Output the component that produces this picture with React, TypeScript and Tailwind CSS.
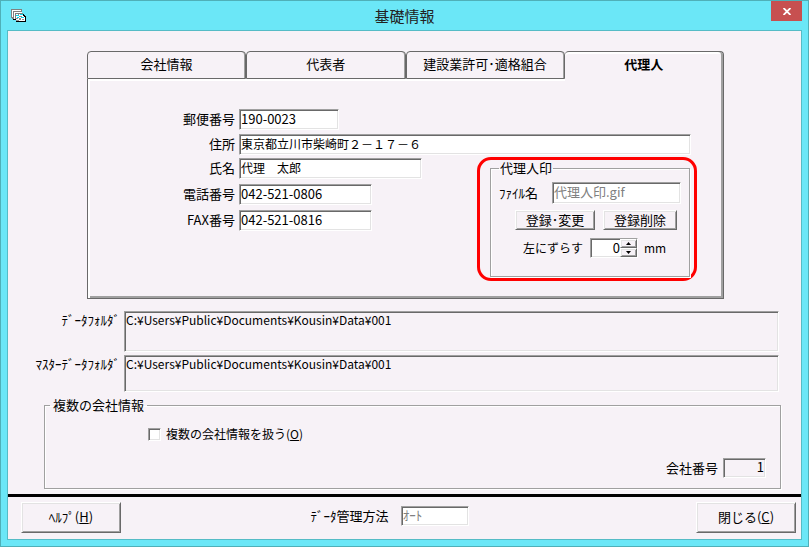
import { useState } from "react";

const tabs = ["会社情報", "代表者", "建設業許可･適格組合", "代理人"];

const sunken =
  "block border border-t-[#a0a0a0] border-l-[#a0a0a0] border-b-white border-r-white px-px leading-[16px] shadow-[inset_1px_1px_0_#696969,inset_-1px_-1px_0_#e3e3e3] outline-none";
const raised =
  "border border-t-white border-l-white border-b-[#696969] border-r-[#696969] bg-[#f7f2f7] shadow-[inset_1px_1px_0_#e3e3e3,inset_-1px_-1px_0_#a0a0a0] text-center";
const group = "border border-[#a0a0a0] shadow-[1px_1px_0_#fff,inset_1px_1px_0_#fff]";

function AppIcon() {
  return (
    <svg width="15" height="13" viewBox="0 0 15 13" shapeRendering="crispEdges">
      <path d="M0 0h11v9H0z" fill="#808080" />
      <path d="M1 1h9v7H1z" fill="#fff" />
      <path d="M1 9h1v1H1zM2 2h9v8H2z" fill="#808080" />
      <path d="M3 3h8v7H3z" fill="#fff" />
      <path d="M4 4h8v7H4z" fill="#808080" />
      <path d="M12 5h1v1h1v1h1v6H5v-1h9V8h-1V7h-1zM2 10h3v1H2z" fill="#000" />
      <path d="M5 5h7v2h1v1h1v4H5z" fill="#fff" />
      <path d="M5 6h3v1H5zM9 5h3v1H9zM6 8h2v1H6zM10 8h3v1h-3z" fill="#00d8f0" />
      <path d="M7 5h1v1H7zM8 7h3v1H8zM5 9h2v1H5zM8 9h2v2H8zM11 10h2v1h-2zM5 11h3v1H5z" fill="#909090" />
    </svg>
  );
}

type FieldProps = { id: string; label: string; value: string; width: string; focused?: boolean };

function Field({ id, label, value, width, focused }: FieldProps) {
  return (
    <div className="flex h-[21px] items-center gap-1">
      <label htmlFor={id} className="w-[147px] shrink-0 pb-[2px] text-right">
        {label}
      </label>
      <input
        id={id}
        defaultValue={value}
        autoFocus={focused}
        onFocus={(e) => e.target.setSelectionRange(value.length, value.length)}
        className={`${sunken} h-[21px] bg-white pb-[3px] ${width}`}
      />
    </div>
  );
}

export default function App() {
  const [active, setActive] = useState(3);
  const [shift, setShift] = useState(0);
  const [multi, setMulti] = useState(false);

  return (
    <div className="flex min-h-screen flex-col border border-[#4fb0b8] bg-[#6be7f7] px-[6px] pb-[6px] font-['Noto_Sans_CJK_JP',sans-serif] text-[13px] leading-[18px] text-black">
      <header className="grid h-[29px] grid-cols-[1fr_auto_1fr] items-center">
        <div className="pl-1">
          <AppIcon />
        </div>
        <h1 className="text-[15px] text-[#222]">基礎情報</h1>
        <button aria-label="閉じる" className="flex h-[20px] w-[31px] items-center justify-center self-start justify-self-end bg-[#c75050]">
          <svg width="8" height="7" viewBox="0 0 8 7">
            <path d="M0.5 0l7 7M7.5 0l-7 7" stroke="#fff" strokeWidth="1.8" />
          </svg>
        </button>
      </header>

      <main className="flex flex-1 flex-col border border-[#55bcc6] bg-[#f7f2f7]">
        <div className="flex-1 pb-1">
          <section className="mt-5 mr-[77px] ml-[79px]">
            <div role="tablist" className="grid grid-cols-4">
              {tabs.map((name, i) => (
                <button
                  key={name}
                  role="tab"
                  aria-selected={active === i}
                  onClick={() => setActive(i)}
                  className={
                    active === i
                      ? "h-[28px] rounded-t-[4px] border-t border-r border-[#696969] pb-1 font-bold shadow-[inset_-2px_0_0_#a0a0a0,inset_0_2px_0_#fff]"
                      : "h-[28px] rounded-t-[4px] border border-[#696969] pb-[2px] shadow-[inset_-1px_0_0_#a0a0a0,0_2px_0_#fff]"
                  }
                >
                  {name}
                </button>
              ))}
            </div>
            <div className="relative border-r border-b border-l border-[#696969] pt-[30px] pb-[17px] shadow-[inset_2px_0_0_#fff,inset_-2px_-2px_0_#a0a0a0]">
              <div className="flex flex-col gap-1 pr-8">
                <Field id="zip" label="郵便番号" value="190-0023" width="w-[100px]" />
                <Field id="address" label="住所" value="東京都立川市柴崎町２－１７－６" width="flex-1 text-[12px]" />
              </div>
              <div className="mt-[2px] flex justify-between pr-[26px]">
                <div className="flex flex-col gap-[5px] pt-px">
                  <Field id="name" label="氏名" value="代理　太郎" width="w-[183px] text-[12px]" />
                  <Field id="tel" label="電話番号" value="042-521-0806" width="w-[133px]" />
                  <Field id="fax" label="FAX番号" value="042-521-0816" width="w-[133px]" focused />
                </div>
                <div className="w-[220px] rounded-[14px] border-[3px] border-[#f00] pr-1 pb-px pl-[10px]">
                  <fieldset className={`${group} h-[117px] px-2`}>
                    <legend className="px-px leading-[16px]">代理人印</legend>
                    <div className="flex items-center justify-between pt-[6px]">
                      <label htmlFor="file">ﾌｧｲﾙ名</label>
                      <input id="file" readOnly defaultValue="代理人印.gif" className={`${sunken} h-[22px] w-[129px] bg-white pb-1 text-[#808080]`} />
                    </div>
                    <div className="mt-[6px] flex justify-end gap-2 pr-1">
                      <button className={`${raised} h-[20px] w-[80px] leading-[16px]`}>登録･変更</button>
                      <button className={`${raised} h-[20px] w-[74px] leading-[16px]`}>登録削除</button>
                    </div>
                    <div className="mt-2 flex items-center pl-6">
                      <label htmlFor="shift" className="w-[67px] text-[12px]">左にずらす</label>
                      <div className={`${sunken} flex h-[20px] w-[48px] bg-white`}>
                        <input id="shift" value={shift} onChange={(e) => setShift(Number(e.target.value) || 0)} className="w-[28px] text-right outline-none" />
                        <div className="flex flex-col">
                          <button aria-label="増やす" onClick={() => setShift(shift + 1)} className={`${raised} flex h-[9px] w-[17px] items-center justify-center`}>
                            <svg width="5" height="3" viewBox="0 0 5 3"><path d="M0 3h5L2.5 0z" /></svg>
                          </button>
                          <button aria-label="減らす" onClick={() => setShift(shift - 1)} className={`${raised} flex h-[9px] w-[17px] items-center justify-center`}>
                            <svg width="5" height="3" viewBox="0 0 5 3"><path d="M0 0h5L2.5 3z" /></svg>
                          </button>
                        </div>
                      </div>
                      <span className="pl-[6px] text-[12px]">mm</span>
                    </div>
                  </fieldset>
                </div>
              </div>
            </div>
          </section>

          <section className="mt-3 mr-[22px] grid grid-cols-[113px_1fr] gap-x-[3px] gap-y-[3px] text-right">
            <label htmlFor="data" className="pr-px">ﾃﾞｰﾀﾌｫﾙﾀﾞ</label>
            <textarea id="data" readOnly defaultValue="C:¥Users¥Public¥Documents¥Kousin¥Data¥001" className={`${sunken} h-[41px] w-full resize-none text-left text-[12px]`} />
            <label htmlFor="master" className="pr-px">ﾏｽﾀｰﾃﾞｰﾀﾌｫﾙﾀﾞ</label>
            <textarea id="master" readOnly defaultValue="C:¥Users¥Public¥Documents¥Kousin¥Data¥001" className={`${sunken} h-[37px] w-full resize-none text-left text-[12px]`} />
          </section>

          <fieldset className={`${group} mt-1 mr-5 ml-9 h-[93px] px-[5px]`}>
            <legend className="px-[3px]">複数の会社情報</legend>
            <div className="flex items-center gap-[5px] pt-[11px] pl-[98px]">
              <input id="multi" type="checkbox" checked={multi} onChange={(e) => setMulti(e.target.checked)} className={`${sunken} size-[13px] appearance-none bg-white checked:bg-[#696969]`} />
              <label htmlFor="multi" className="text-[12px]">
                複数の会社情報を扱う(<u>O</u>)
              </label>
            </div>
            <div className="mt-[15px] flex items-center justify-end gap-[5px] pr-[9px]">
              <label htmlFor="company">会社番号</label>
              <input id="company" readOnly defaultValue="1" className={`${sunken} h-[20px] w-[43px] pb-[3px] text-right`} />
            </div>
          </fieldset>
        </div>

        <footer className="grid grid-cols-[10fr_auto_11fr] items-start border-t-[3px] border-black px-[5px] pt-[5px] pb-[6px]">
          <button className={`${raised} ml-2 h-[31px] w-[100px] pb-[2px]`}>
            ﾍﾙﾌﾟ(<u>H</u>)
          </button>
          <div className="flex items-center gap-3 pt-1">
            <label htmlFor="mode">ﾃﾞｰﾀ管理方法</label>
            <input id="mode" readOnly defaultValue="ｵｰﾄ" className={`${sunken} h-[20px] w-[68px] bg-white pb-[3px] text-[#808080]`} />
          </div>
          <button className={`${raised} h-[31px] w-[100px] justify-self-end pb-[2px]`}>
            閉じる(<u>C</u>)
          </button>
        </footer>
      </main>
    </div>
  );
}
